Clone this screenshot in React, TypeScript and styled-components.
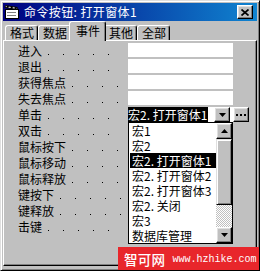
import React from "react";
import styled, { createGlobalStyle } from "styled-components";

const GRAY = "#c0c0c0";

const Global = createGlobalStyle`
  html, body { margin: 0; padding: 0; background: ${GRAY}; }
  body { font-family: "Noto Sans CJK SC", "Noto Sans", sans-serif; font-size: 12px; color: #000; }
`;

const Window = styled.div`
  position: relative;
  box-sizing: border-box;
  width: 260px;
  height: 271px;
  background: ${GRAY};
  border: 1px solid;
  border-color: #dfdfdf #000 #000 #dfdfdf;
  box-shadow: inset 1px 1px #fff, inset -1px -1px #808080;
  padding: 2px 2px 4px;
  display: flex;
  flex-direction: column;
  overflow: hidden;
`;

const TitleBar = styled.div`
  flex: none;
  height: 18px;
  display: flex;
  align-items: center;
  padding: 0 4px 0 1px;
  background: linear-gradient(to right, #000080, #1084d0);
  color: #fff;
  font-size: 12px;
  line-height: 18px;
`;

const TitleIcon = styled.svg`
  flex: none;
  margin-right: 4px;
`;

const TitleText = styled.span`
  flex: 1;
  white-space: pre;
  letter-spacing: 0.4px;
`;

const RaisedButton = styled.div<{ $w: number; $h: number }>`
  flex: none;
  box-sizing: border-box;
  width: ${(p) => p.$w}px;
  height: ${(p) => p.$h}px;
  background: ${GRAY};
  border: 1px solid;
  border-color: #fff #000 #000 #fff;
  box-shadow: inset -1px -1px #808080, inset 1px 1px #dfdfdf;
  display: flex;
  align-items: center;
  justify-content: center;
`;

const TabStrip = styled.div`
  flex: none;
  height: 19px;
  display: flex;
  align-items: flex-end;
  padding-left: 2px;
  position: relative;
  z-index: 1;
`;

const Tab = styled.div<{ $active?: boolean }>`
  box-sizing: border-box;
  height: ${(p) => (p.$active ? 20 : 15)}px;
  margin: 0 ${(p) => (p.$active ? "-2px" : "0")} ${(p) => (p.$active ? "-1px" : "0")};
  padding: 0 ${(p) => (p.$active ? 5 : 3)}px 0 ${(p) => (p.$active ? 6 : 4)}px;
  background: ${GRAY};
  border: 1px solid;
  border-bottom: none;
  border-color: #fff #000 #000 #fff;
  box-shadow: inset -1px 0 #808080;
  border-radius: 3px 3px 0 0;
  line-height: ${(p) => (p.$active ? 17 : 14)}px;
  white-space: nowrap;
  position: relative;
  z-index: ${(p) => (p.$active ? 2 : 1)};
`;

const Panel = styled.div`
  flex: 1;
  box-sizing: border-box;
  border: 1px solid;
  border-color: #fff #000 #000 #fff;
  box-shadow: inset -1px -1px #808080;
  padding-top: 2px;
  display: flex;
  flex-direction: column;
`;

const Row = styled.div`
  display: flex;
  height: 16px;
  flex: none;
`;

const Label = styled.div`
  box-sizing: border-box;
  width: 124px;
  padding: 0 6px 0 14px;
  display: flex;
  align-items: center;
  line-height: 16px;
  white-space: nowrap;
`;

const Leader = styled.span`
  flex: 1;
  align-self: stretch;
  background-image: repeating-linear-gradient(
    to right,
    transparent 0 6px,
    #000 6px 7px,
    transparent 7px 15px
  );
  background-size: 100% 1px;
  background-repeat: no-repeat;
  background-position: 0 11px;
`;

const Value = styled.div<{ $combo?: boolean }>`
  position: relative;
  flex: none;
  width: 105px;
  height: ${(p) => (p.$combo ? 15 : 14)}px;
  background: #fff;
  display: flex;
  align-items: center;
  justify-content: space-between;
`;

const Side = styled.div`
  flex: 1;
  display: flex;
  align-items: flex-start;
`;

const Highlight = styled.span`
  background: #000;
  color: #fff;
  line-height: 15px;
  padding: 0 1px 0 0;
  white-space: pre;
`;

const DropList = styled.div`
  position: absolute;
  left: 0;
  top: 100%;
  z-index: 3;
  box-sizing: border-box;
  width: 105px;
  height: 122px;
  border: 1px solid #000;
  background: #fff;
  display: flex;
`;

const Items = styled.div`
  flex: 1;
  display: flex;
  flex-direction: column;
`;

const Item = styled.div<{ $sel?: boolean }>`
  height: 15px;
  line-height: 15px;
  margin-left: 1px;
  padding-left: 2px;
  white-space: pre;
  overflow: hidden;
  background: ${(p) => (p.$sel ? "#000" : "transparent")};
  color: ${(p) => (p.$sel ? "#fff" : "#000")};
`;

const ScrollBar = styled.div`
  flex: none;
  width: 16px;
  display: flex;
  flex-direction: column;
`;

const Thumb = styled.div`
  flex: none;
  box-sizing: border-box;
  height: 66px;
  background: ${GRAY};
  border: 1px solid;
  border-color: #dfdfdf #000 #000 #dfdfdf;
  box-shadow: inset 1px 1px #fff, inset -1px -1px #808080;
`;

const Track = styled.div`
  flex: 1;
  background: repeating-conic-gradient(${GRAY} 0 25%, #fff 0 50%) 0 0 / 2px 2px;
`;

const Watermark = styled.div`
  position: absolute;
  right: -1px;
  bottom: -1px;
  z-index: 5;
  width: 142px;
  height: 24px;
  background: #e8262b;
  color: #fff;
  display: flex;
  align-items: center;
  padding-left: 6px;
  box-sizing: border-box;
  gap: 7px;
`;

const MarkName = styled.span`
  font-size: 13.5px;
  line-height: 16px;
  font-weight: 500;
  letter-spacing: 0.3px;
`;

const MarkUrl = styled.span`
  font-family: "Liberation Mono", monospace;
  font-size: 10px;
  line-height: 12px;
  margin-top: 2px;
`;

const DownArrow = () => (
  <svg width="7" height="4" viewBox="0 0 7 4">
    <path d="M0 0h7L3.5 4z" fill="#000" />
  </svg>
);

const UpArrow = () => (
  <svg width="7" height="4" viewBox="0 0 7 4">
    <path d="M3.5 0L7 4H0z" fill="#000" />
  </svg>
);

const Dots = () => (
  <svg width="10" height="2" viewBox="0 0 10 2">
    <rect x="0" y="0" width="2" height="2" fill="#000" />
    <rect x="4" y="0" width="2" height="2" fill="#000" />
    <rect x="8" y="0" width="2" height="2" fill="#000" />
  </svg>
);

const FormIcon = () => (
  <TitleIcon width="16" height="16" viewBox="0 0 16 16">
    <rect x="1.5" y="5.5" width="13" height="9" fill="#fff" stroke="#000" />
    <rect x="3" y="8" width="9" height="1" fill="#808080" />
    <rect x="3" y="11" width="9" height="1" fill="#808080" />
    <path d="M1.5 1.5L13.5 3.5L13 5.5L1 3.5Z" fill="#fff" stroke="#000" />
    <path d="M3 1.8L5 2.1L4.2 4.1L2.2 3.8Z M7 2.4L9 2.8L8.3 4.8L6.3 4.5Z M11 3.1L13 3.4L12.4 5.3L10.4 5Z" fill="#000" />
  </TitleIcon>
);

const rows = [
  "进入",
  "退出",
  "获得焦点",
  "失去焦点",
  "单击",
  "双击",
  "鼠标按下",
  "鼠标移动",
  "鼠标释放",
  "键按下",
  "键释放",
  "击键",
];

const items = [
  "宏1",
  "宏2",
  "宏2. 打开窗体1",
  "宏2. 打开窗体2",
  "宏2. 打开窗体3",
  "宏2. 关闭",
  "宏3",
  "数据库管理",
];

const tabs = ["格式", "数据", "事件", "其他", "全部"];

export default function App() {
  return (
    <>
      <Global />
      <Window>
        <TitleBar>
          <FormIcon />
          <TitleText>命令按钮: 打开窗体1</TitleText>
          <RaisedButton $w={16} $h={14}>
            <svg width="8" height="7" viewBox="0 0 8 7">
              <path d="M0.5 0.5L7.5 6.5M7.5 0.5L0.5 6.5" stroke="#000" strokeWidth="1.7" />
            </svg>
          </RaisedButton>
        </TitleBar>
        <TabStrip>
          {tabs.map((t) => (
            <Tab key={t} $active={t === "事件"}>
              {t}
            </Tab>
          ))}
        </TabStrip>
        <Panel>
          {rows.map((r, i) => {
            const combo = i === 4;
            return (
              <Row key={r}>
                <Label>
                  {r}
                  <Leader />
                </Label>
                <Value $combo={combo}>
                  {combo && (
                    <>
                      <Highlight>宏2. 打开窗体1</Highlight>
                      <RaisedButton $w={16} $h={15} style={{ marginRight: 3 }}>
                        <DownArrow />
                      </RaisedButton>
                      <DropList>
                        <Items>
                          {items.map((it) => (
                            <Item key={it} $sel={it === "宏2. 打开窗体1"}>
                              {it}
                            </Item>
                          ))}
                        </Items>
                        <ScrollBar>
                          <RaisedButton $w={16} $h={16}>
                            <UpArrow />
                          </RaisedButton>
                          <Thumb />
                          <Track />
                          <RaisedButton $w={16} $h={16}>
                            <DownArrow />
                          </RaisedButton>
                        </ScrollBar>
                      </DropList>
                    </>
                  )}
                </Value>
                <Side>
                  {combo && (
                    <RaisedButton $w={16} $h={15}>
                      <Dots />
                    </RaisedButton>
                  )}
                </Side>
              </Row>
            );
          })}
        </Panel>
        <Watermark>
          <MarkName>智可网</MarkName>
          <MarkUrl>www.hzhike.com</MarkUrl>
        </Watermark>
      </Window>
    </>
  );
}
